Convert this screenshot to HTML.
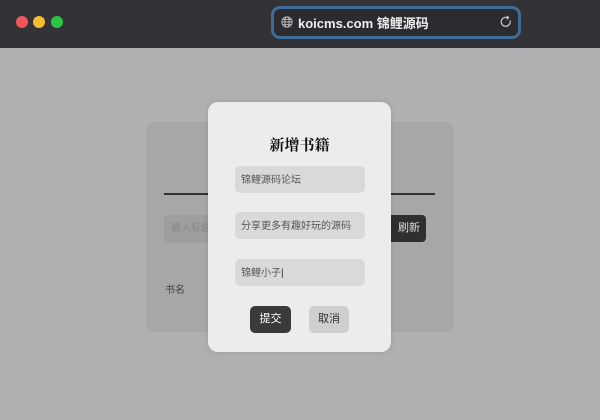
<!DOCTYPE html>
<html><head><meta charset="utf-8"><style>
*{margin:0;padding:0;box-sizing:border-box}
body{width:600px;height:420px;overflow:hidden;background:#b0b0b2;font-family:"Liberation Sans","Noto Sans CJK SC",sans-serif;position:relative}
.bar{position:absolute;left:0;top:0;width:600px;height:48px;background:#333337}
.dot{position:absolute;top:16px;width:12px;height:12px;border-radius:50%}
.addr{position:absolute;left:271px;top:6px;width:250px;height:33px;border:3px solid #3f6d98;border-radius:9px;background:#2c2c30;color:#eee;font-size:13px;font-weight:bold}
.card{position:absolute;left:146px;top:122px;width:308px;height:210px;background:#a7a7a9;border-radius:8px}
.modal{position:absolute;left:208px;top:102px;width:183px;height:250px;background:#ececee;border-radius:10px;box-shadow:0 0 6px rgba(0,0,0,.12)}
.in{position:absolute;left:27px;width:130px;height:27px;background:#d9d9db;border-radius:5px;font-size:10px;color:#555;padding-left:6px;line-height:29px}
.btn{position:absolute;top:204px;height:27px;width:41px;border-radius:5px;font-size:11px;line-height:27px;text-align:center}
</style></head><body>
<div class="bar">
<div class="dot" style="left:16px;background:#f0565a"></div>
<div class="dot" style="left:33px;background:#f5bd2f"></div>
<div class="dot" style="left:51px;background:#2bc443"></div>
<div class="addr">
<svg style="position:absolute;left:7px;top:7px" width="12" height="12" viewBox="0 0 14 14" fill="none" stroke="#bbb" stroke-width="1.1"><circle cx="7" cy="7" r="6"/><ellipse cx="7" cy="7" rx="2.6" ry="6"/><path d="M1 7h12M2 4h10M2 10h10"/></svg>
<span style="position:absolute;left:24px;top:4px">koicms.com 锦鲤源码</span>
<svg style="position:absolute;left:225px;top:6px" width="14" height="14" viewBox="0 0 14 14" fill="none" stroke="#ccc" stroke-width="1.2"><path d="M11 5.5A4.5 4.5 0 1 1 8.5 2.7"/><path d="M8 1l1.5 1.7L7.7 4.2"/></svg>
</div>
</div>
<div class="card">
<div style="position:absolute;left:18px;top:71px;width:271px;height:2px;background:#333"></div>
<div style="position:absolute;left:18px;top:93px;width:60px;height:28px;background:#9e9ea0;border-radius:4px;font-size:10px;color:#888;padding-left:7px;line-height:28px">输入标题</div>
<div style="position:absolute;left:238px;top:93px;width:42px;height:27px;background:#2f2f31;border-radius:4px;color:#ddd;font-size:11px;line-height:27px;text-align:right;padding-right:6px">刷新</div>
<div style="position:absolute;left:19px;top:159px;font-size:10px;color:#444">书名</div>
</div>
<div class="modal">
<div style="position:absolute;left:0;width:183px;top:32px;text-align:center;font-family:'Liberation Serif','Noto Serif CJK SC',serif;font-weight:bold;font-size:15px;color:#111">新增书籍</div>
<div class="in" style="top:64px">锦鲤源码论坛</div>
<div class="in" style="top:110px">分享更多有趣好玩的源码</div>
<div class="in" style="top:157px">锦鲤小子<span style="color:#333">|</span></div>
<div class="btn" style="left:42px;background:#3a3a3c;color:#fff">提交</div>
<div class="btn" style="left:101px;width:40px;background:#cfcfd1;color:#333">取消</div>
</div>
</body></html>
